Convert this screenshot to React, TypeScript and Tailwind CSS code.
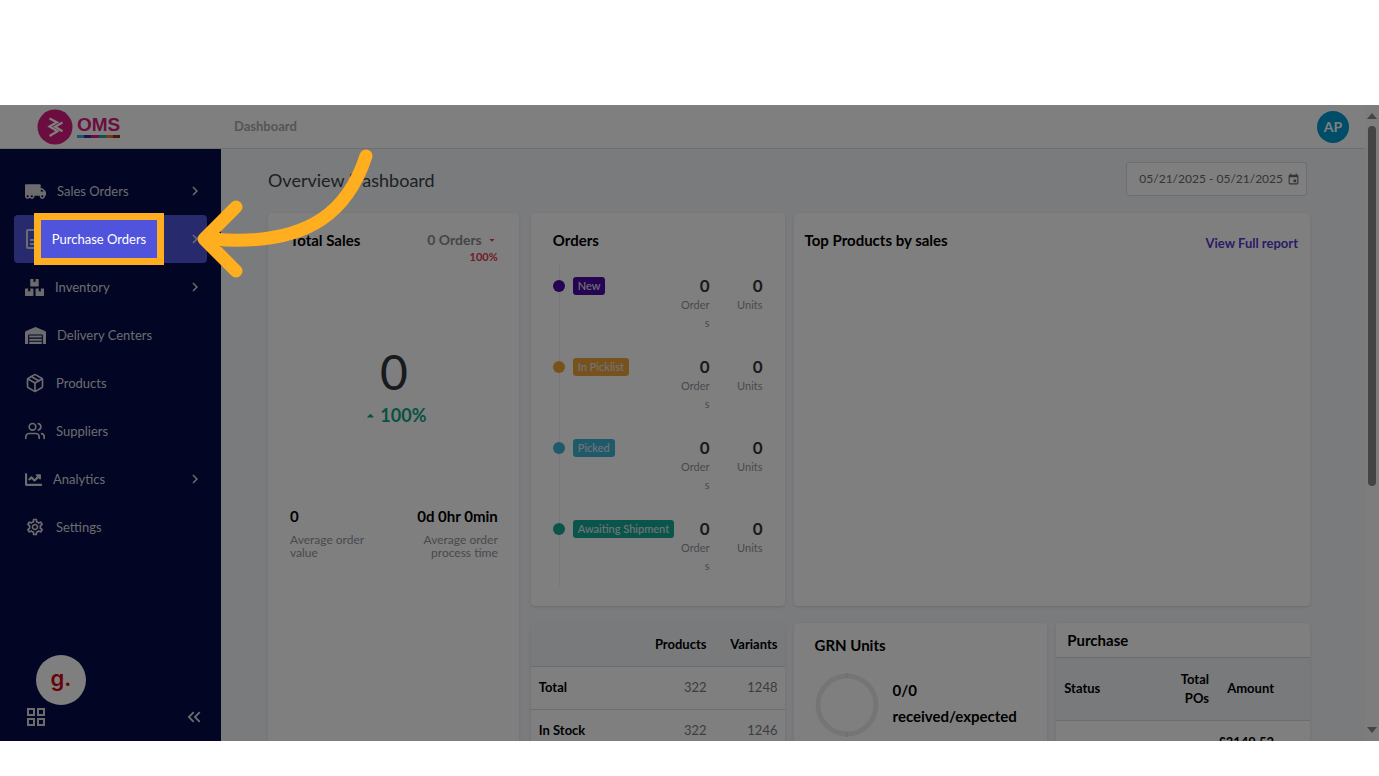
import React from "react";
import {
  FaTruckMoving,
  FaBoxes,
  FaWarehouse,
  FaChartLine,
  FaCaretUp,
  FaCaretDown,
} from "react-icons/fa";
import { FiPackage, FiUsers } from "react-icons/fi";
import {
  MdOutlineSettings,
  MdKeyboardArrowRight,
  MdKeyboardDoubleArrowLeft,
  MdOutlineDescription,
  MdOutlineGridView,
  MdEvent,
} from "react-icons/md";

interface NavItem {
  label: string;
  icon: React.ReactNode;
  expandable?: boolean;
  active?: boolean;
}

const navItems: NavItem[] = [
  { label: "Sales Orders", icon: <FaTruckMoving size={21} />, expandable: true },
  {
    label: "Purchase Orders",
    icon: <MdOutlineDescription size={24} />,
    expandable: true,
    active: true,
  },
  { label: "Inventory", icon: <FaBoxes size={19} />, expandable: true },
  { label: "Delivery Centers", icon: <FaWarehouse size={21} /> },
  { label: "Products", icon: <FiPackage size={20} /> },
  { label: "Suppliers", icon: <FiUsers size={20} /> },
  { label: "Analytics", icon: <FaChartLine size={17} />, expandable: true },
  { label: "Settings", icon: <MdOutlineSettings size={20} /> },
];

const orderStatuses = [
  { label: "New", color: "bg-[#4a08a8]" },
  { label: "In Picklist", color: "bg-[#f0a43a]" },
  { label: "Picked", color: "bg-[#3db5d8]" },
  { label: "Awaiting Shipment", color: "bg-[#12ab98]" },
];

const stockRows = [
  { label: "Total", products: 322, variants: 1248 },
  { label: "In Stock", products: 322, variants: 1246 },
];

const Logo: React.FC = () => (
  <div className="flex w-[221px] shrink-0 items-center gap-1 pl-[37px]">
    <svg width="36" height="36" viewBox="0 0 36 36" aria-hidden="true">
      <circle cx="18" cy="18" r="17.5" fill="#d61a7c" />
      <path
        d="M12.5 9.5 L20 13.2 L12.5 17.5 L20.5 22.2 L12.5 27 M25.5 13.5 L18 17.7 L25.5 22.2"
        fill="none"
        stroke="#fff"
        strokeWidth="2.2"
      />
    </svg>
    <div>
      <div className="font-['Liberation_Sans'] text-[19px] leading-5 font-bold text-[#d61a7c]">
        OMS
      </div>
      <div className="flex h-[3px]">
        <span className="flex-1 bg-[#38a8d8]" />
        <span className="flex-1 bg-[#2a2f9c]" />
        <span className="flex-1 bg-[#e0187f]" />
        <span className="flex-1 bg-[#12a8a0]" />
        <span className="flex-1 bg-[#e8702a]" />
        <span className="flex-1 bg-[#8a3020]" />
      </div>
    </div>
  </div>
);

const Header: React.FC = () => (
  <header className="flex h-11 shrink-0 items-center border-b border-[#dcdee2] bg-white">
    <Logo />
    <span className="pt-px pl-[13px] text-[13px] font-bold text-[#a8abb2]">Dashboard</span>
    <button
      type="button"
      className="mt-px mr-4 ml-auto flex size-8 items-center justify-center rounded-full bg-[#009bce] text-sm font-bold text-white"
    >
      AP
    </button>
  </header>
);

const Sidebar: React.FC = () => (
  <aside className="flex w-[221px] shrink-0 flex-col bg-[#050a48] text-[13px] text-[#d8d8dc]">
    <nav className="px-[14px] pt-[18px]">
      <ul>
        {navItems.map((item) => (
          <li key={item.label}>
            <a
              href="#"
              className={
                item.active
                  ? "relative flex h-12 items-center rounded bg-[#5054dc] px-2"
                  : "flex h-12 items-center gap-[11px] px-[11px]"
              }
            >
              {item.icon}
              {item.active ? (
                <span className="absolute -top-[2px] left-5 z-20 flex h-[52px] w-[130px] items-center justify-center border-[7px] border-[#ffae1f] bg-[#5054dc] pt-[2px] text-white">
                  {item.label}
                </span>
              ) : (
                <span className="pt-[2px]">{item.label}</span>
              )}
              {item.expandable && (
                <MdKeyboardArrowRight
                  size={18}
                  className={item.active ? "-mr-[5px] ml-auto" : "-mr-2 ml-auto"}
                />
              )}
            </a>
          </li>
        ))}
      </ul>
    </nav>

    <div className="mt-auto pb-3">
      <button
        type="button"
        className="ml-9 flex size-[50px] items-center justify-center rounded-full bg-white pb-1 font-['Inter'] text-[22px] font-semibold text-[#d00510]"
      >
        g.
      </button>
      <div className="flex items-center justify-between pr-4 pl-6">
        <button type="button" aria-label="Apps">
          <MdOutlineGridView size={24} />
        </button>
        <button type="button" aria-label="Collapse menu">
          <MdKeyboardDoubleArrowLeft size={22} />
        </button>
      </div>
    </div>
  </aside>
);

const TotalSales: React.FC = () => (
  <section className="row-span-2 mr-[3px] rounded bg-white pt-[17px] pr-[21px] pl-[22px] shadow">
    <div className="flex items-start justify-between">
      <h2 className="text-[15px] leading-5 font-bold">Total Sales</h2>
      <div className="text-right">
        <div className="flex items-center justify-end text-sm leading-5 font-bold text-[#878b92]">
          0 Orders
          <FaCaretDown size={8} className="mr-[2px] ml-[6px] text-[#e0384f]" />
        </div>
        <div className="text-[11px] leading-[14px] font-bold text-[#e0384f]">100%</div>
      </div>
    </div>
    <div className="pt-[77px] text-center">
      <div className="text-5xl leading-[62px] text-[#30363c]">0</div>
      <div className="flex items-center justify-center gap-1 pl-1 text-lg leading-6 font-bold text-[#0fa582]">
        <FaCaretUp size={11} />
        100%
      </div>
    </div>
    <div className="flex justify-between pt-[79px]">
      <div className="w-20">
        <div className="text-[15px] leading-5 font-bold">0</div>
        <div className="pt-[7px] text-xs leading-[13px] text-[#90949b]">
          Average order value
        </div>
      </div>
      <div className="w-[82px] text-right">
        <div className="flex justify-end text-[15px] leading-5 font-bold whitespace-nowrap">
          0d 0hr 0min
        </div>
        <div className="pt-[7px] text-xs leading-[13px] text-[#90949b]">
          Average order process time
        </div>
      </div>
    </div>
  </section>
);

const Count: React.FC<{ label: string; width: string }> = ({ label, width }) => (
  <div className={`text-right ${width}`}>
    <div className="text-[17px] leading-5 font-bold text-[#30363c]">0</div>
    <div className="text-[11px] leading-[18px] break-all text-[#90949b]">{label}</div>
  </div>
);

const Orders: React.FC = () => (
  <section className="h-[393px] rounded bg-white px-[22px] pt-[17px] shadow">
    <h2 className="text-[15px] leading-5 font-bold">Orders</h2>
    <div className="relative mt-[14px] pt-3">
      <div className="absolute top-0 left-[6px] h-[322px] w-px bg-[#eceef0]" />
      {orderStatuses.map((status) => (
        <div key={status.label} className="flex h-[81px] items-start">
          <span className={`relative mt-1 size-3 rounded-full ${status.color}`} />
          <span
            className={`mt-px ml-2 rounded-[3px] px-[5px] text-[11px] leading-[18px] font-medium whitespace-nowrap text-[#e4e6ea] ${status.color}`}
          >
            {status.label}
          </span>
          <div className="ml-auto flex">
            <Count label="Orders" width="w-[31px]" />
            <Count label="Units" width="w-[53px]" />
          </div>
        </div>
      ))}
    </div>
  </section>
);

const TopProducts: React.FC = () => (
  <section className="col-span-2 flex items-start justify-between rounded bg-white pt-[17px] pr-3 pl-[11px] shadow">
    <h2 className="text-[15px] leading-5 font-bold">Top Products by sales</h2>
    <a href="#" className="pt-[3px] text-[13px] leading-5 font-bold text-[#5738cc]">
      View Full report
    </a>
  </section>
);

const StockTable: React.FC = () => (
  <section className="overflow-hidden rounded bg-white shadow">
    <table className="w-full text-[13px]">
      <thead>
        <tr className="h-[43px] border-b border-[#d5dade] bg-[#f2f5f8]">
          <th />
          <th className="text-right font-bold">Products</th>
          <th className="w-[78px] pr-[7px] text-right font-bold">Variants</th>
        </tr>
      </thead>
      <tbody>
        {stockRows.map((row) => (
          <tr key={row.label} className="h-[43px] border-b border-[#d5dade]">
            <th className="pt-px pl-2 text-left font-bold">{row.label}</th>
            <td className="pt-px text-right text-[#777b82]">{row.products}</td>
            <td className="pt-px pr-[7px] text-right text-[#777b82]">{row.variants}</td>
          </tr>
        ))}
      </tbody>
    </table>
  </section>
);

const GrnUnits: React.FC = () => (
  <section className="rounded bg-white px-[21px] pt-3 shadow">
    <h2 className="text-[15px] leading-5 font-bold">GRN Units</h2>
    <div className="flex items-start gap-[14px] pt-[18px]">
      <svg width="64" height="64" viewBox="0 0 64 64" className="shrink-0" aria-hidden="true">
        <circle cx="32" cy="32" r="29" fill="none" stroke="#ebebed" strokeWidth="5" />
        <path d="M32 0v5M32 59v5" stroke="#e6dae8" strokeWidth="2" />
      </svg>
      <div className="pt-1 text-[15px] leading-[26px] font-bold">
        0/0
        <br />
        received/expected
      </div>
    </div>
  </section>
);

const PurchaseTable: React.FC = () => (
  <section className="overflow-hidden rounded bg-white shadow">
    <h2 className="px-[11px] py-[7px] text-[15px] leading-5 font-bold">Purchase</h2>
    <table className="w-full text-[13px]">
      <thead>
        <tr className="h-[63px] border-y border-[#d5dade] bg-[#f2f5f8]">
          <th className="pl-2 text-left font-bold">Status</th>
          <th className="w-10 text-right leading-[19px] font-bold">Total POs</th>
          <th className="w-[101px] pr-9 text-right font-bold">Amount</th>
        </tr>
      </thead>
      <tbody>
        <tr className="h-[43px]">
          <td />
          <td />
          <td className="pr-9 text-right font-bold">£3149.52</td>
        </tr>
      </tbody>
    </table>
  </section>
);

const Scrollbar: React.FC = () => (
  <div className="flex w-[14px] shrink-0 flex-col items-center bg-[#fafafa] py-2 text-[#888]">
    <svg width="10" height="6" viewBox="0 0 10 6" aria-hidden="true">
      <path d="M5 0 L10 6 H0Z" fill="currentColor" />
    </svg>
    <div className="mt-[7px] h-[58%] w-2 rounded-full bg-[#888]" />
    <svg width="10" height="6" viewBox="0 0 10 6" className="mt-auto" aria-hidden="true">
      <path d="M0 0 H10 L5 6Z" fill="currentColor" />
    </svg>
  </div>
);

// Curved arrow pointing at the highlighted menu entry
const PointerArrow: React.FC = () => (
  <svg
    width="180"
    height="132"
    viewBox="196 148 180 132"
    className="pointer-events-none absolute top-[43px] left-[196px] z-20"
    fill="none"
    stroke="#ffae1f"
    strokeWidth="13"
    strokeLinecap="round"
    strokeLinejoin="round"
    aria-hidden="true"
  >
    <path d="M366 156 C350 205 315 248 212 239" />
    <path d="M236 207 L204 239 L236 271" />
  </svg>
);

const App: React.FC = () => {
  return (
    <div className="h-screen overflow-hidden bg-white pt-[105px] pb-[35px] font-['Lato',sans-serif]">
      <div className="relative flex h-full overflow-hidden">
        <div className="flex min-w-0 flex-1 flex-col">
          <Header />
          <div className="flex min-h-0 flex-1">
            <Sidebar />
            <main className="min-w-0 flex-1 overflow-hidden bg-[#f5f6f9] pt-[13px] pr-[55px] pl-[47px]">
              <div className="flex items-center justify-between pr-[3px]">
                <h1 className="pt-[2px] text-lg text-[#3c4248]">Overview Dashboard</h1>
                <button
                  type="button"
                  className="flex h-[34px] items-center gap-1 rounded-[3px] border border-[#d8dce2] bg-white pr-[6px] pl-3 text-xs text-[#666a70]"
                >
                  05/21/2025 - 05/21/2025
                  <MdEvent size={13} />
                </button>
              </div>
              <div className="grid grid-cols-4 gap-x-[9px] gap-y-[17px] pt-[17px]">
                <TotalSales />
                <Orders />
                <TopProducts />
                <StockTable />
                <GrnUnits />
                <PurchaseTable />
              </div>
            </main>
          </div>
        </div>
        <Scrollbar />
        <div className="pointer-events-none absolute inset-0 z-10 bg-black/50" />
        <PointerArrow />
      </div>
    </div>
  );
};

export default App;
